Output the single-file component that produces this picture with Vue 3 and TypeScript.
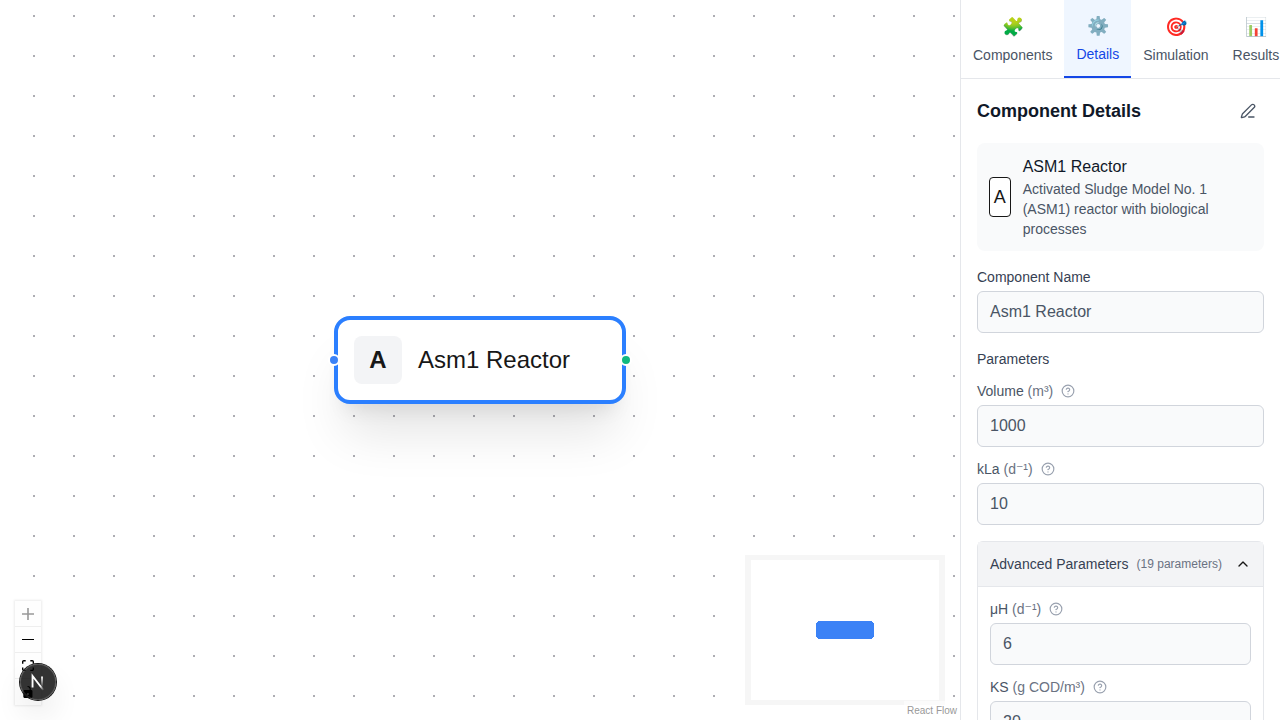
<script setup lang="ts">
interface Tab {
  icon: string
  label: string
}

interface Param {
  name: string
  unit: string
  value: string
}

const tabs: Tab[] = [
  { icon: '🧩', label: 'Components' },
  { icon: '⚙️', label: 'Details' },
  { icon: '🎯', label: 'Simulation' },
  { icon: '📊', label: 'Results' },
]
const activeTab = 'Details'

const params: Param[] = [
  { name: 'Volume', unit: '(m³)', value: '1000' },
  { name: 'kLa', unit: '(d⁻¹)', value: '10' },
]

const advanced: Param[] = [
  { name: 'μH', unit: '(d⁻¹)', value: '6' },
  { name: 'KS', unit: '(g COD/m³)', value: '20' },
]

const helpPath =
  'M22 12a10 10 0 1 1-20 0 10 10 0 0 1 20 0ZM9.09 9a3 3 0 0 1 5.83 1c0 2-3 3-3 3M12 17h.01'

const controls = [
  {
    name: 'Zoom in',
    box: '0 0 32 32',
    disabled: true,
    path: 'M32 18.133H18.133V32h-4.266V18.133H0v-4.266h13.867V0h4.266v13.867H32z',
  },
  { name: 'Zoom out', box: '0 0 32 5', disabled: false, path: 'M0 0h32v4.2H0z' },
  {
    name: 'Fit view',
    box: '0 0 32 30',
    disabled: false,
    path: 'M3.692 4.63c0-.53.4-.938.939-.938h5.215V0H4.708C2.13 0 0 2.054 0 4.63v5.216h3.692V4.631zM27.354 0h-5.2v3.692h5.17c.53 0 .984.4.984.939v5.215H32V4.631A4.624 4.624 0 0027.354 0zm.954 24.83c0 .532-.4.94-.939.94h-5.215v3.768h5.215c2.577 0 4.631-2.13 4.631-4.707v-5.139h-3.692v5.139zm-23.677.94c-.531 0-.939-.4-.939-.94v-5.138H0v5.139c0 2.577 2.13 4.707 4.708 4.707h5.138V25.77H4.631z',
  },
  {
    name: 'Toggle interactivity',
    box: '0 0 25 32',
    disabled: false,
    path: 'M21.333 10.667H19.81V7.619C19.81 3.429 16.38 0 12.19 0c-4.114 1.828-1.37 2.133.305 2.438 1.676.305 4.42 2.59 4.42 5.181v3.048H3.047A3.056 3.056 0 000 13.714v15.238A3.056 3.056 0 003.048 32h18.285a3.056 3.056 0 003.048-3.048V13.714a3.056 3.056 0 00-3.047-3.047zM12.19 24.533a3.056 3.056 0 01-3.047-3.047 3.056 3.056 0 013.047-3.048 3.056 3.056 0 013.048 3.048 3.056 3.056 0 01-3.048 3.047z',
  },
]
</script>

<template>
  <div class="app">
    <main class="canvas">
      <svg class="dots" aria-hidden="true">
        <pattern id="dot-grid" x="14" y="36" width="40" height="40" patternUnits="userSpaceOnUse">
          <circle cx="20" cy="20" r="1" fill="#91919a" />
        </pattern>
        <rect width="100%" height="100%" fill="url(#dot-grid)" />
      </svg>

      <div class="node">
        <span class="handle handle-in"></span>
        <span class="node-icon">A</span>
        <span class="node-label">Asm1 Reactor</span>
        <span class="handle handle-out"></span>
      </div>

      <div class="controls">
        <button v-for="c in controls" :key="c.name" type="button" :aria-label="c.name" :disabled="c.disabled">
          <svg :viewBox="c.box"><path :d="c.path" /></svg>
        </button>
      </div>

      <svg class="minimap" width="200" height="150" viewBox="0 0 200 150">
        <rect width="200" height="150" fill="#fff" />
        <path d="M73 66h54v1h1v1h1v14h-1v1h-1v1H73v-1h-1v-1h-1V68h1v-1h1z" fill="#3b82f6" />
        <path d="M0 0h200v150H0zM6 5v140h188V5z" fill="#f6f6f6" fill-rule="evenodd" />
      </svg>
      <div class="attribution">React Flow</div>

      <div class="badge">
        <svg width="40" height="40" viewBox="0 0 40 40" fill="none">
          <defs>
            <linearGradient id="fade-diagonal" x1="9.95555" y1="11.1226" x2="15.4778" y2="17.9671" gradientUnits="userSpaceOnUse">
              <stop stop-color="#fff" />
              <stop offset="0.604072" stop-color="#fff" stop-opacity="0" />
              <stop offset="1" stop-color="#fff" stop-opacity="0" />
            </linearGradient>
            <linearGradient id="fade-stem" x1="11.8222" y1="1.40039" x2="11.791" y2="12.5" gradientUnits="userSpaceOnUse">
              <stop stop-color="#fff" />
              <stop offset="1" stop-color="#fff" stop-opacity="0" />
            </linearGradient>
          </defs>
          <g transform="translate(12.2 13)" stroke-width="1.86">
            <path d="M13.3 15.2 2.34 1V12.6" stroke="url(#fade-diagonal)" />
            <path d="M11.825 1.5V13.1" stroke="url(#fade-stem)" />
          </g>
        </svg>
      </div>
    </main>

    <aside class="panel">
      <nav class="tabs">
        <button v-for="t in tabs" :key="t.label" type="button" class="tab" :class="{ active: t.label === activeTab }">
          <span class="tab-icon">{{ t.icon }}</span>
          <span>{{ t.label }}</span>
        </button>
      </nav>

      <div class="content">
        <header class="heading">
          <h2>Component Details</h2>
          <button type="button" class="edit" aria-label="Edit">
            <svg width="16" height="16" viewBox="0 0 24 24" fill="none" stroke="currentColor" stroke-width="2" stroke-linecap="round" stroke-linejoin="round">
              <path d="M13 21h8M21.174 6.812a1 1 0 0 0-3.986-3.987L3.842 16.174a2 2 0 0 0-.5.83l-1.321 4.352a.5.5 0 0 0 .623.622l4.353-1.32a2 2 0 0 0 .83-.497z" />
            </svg>
          </button>
        </header>

        <section class="summary">
          <span class="summary-icon">A</span>
          <div>
            <div class="summary-title">ASM1 Reactor</div>
            <div class="summary-text">Activated Sludge Model No. 1 (ASM1) reactor with biological processes</div>
          </div>
        </section>

        <div class="field name-field">
          <div class="label strong">Component Name</div>
          <div class="input">Asm1 Reactor</div>
        </div>

        <div class="label strong section-label">Parameters</div>
        <div class="fields">
          <div v-for="p in params" :key="p.name" class="field">
            <div class="label">
              <span>{{ p.name }} <span class="unit">{{ p.unit }}</span></span>
              <svg class="help" viewBox="0 0 24 24"><path :d="helpPath" /></svg>
            </div>
            <div class="input">{{ p.value }}</div>
          </div>
        </div>

        <section class="advanced">
          <div class="advanced-head">
            <span class="advanced-title">Advanced Parameters</span>
            <span class="advanced-count">(19 parameters)</span>
            <svg class="chevron" width="16" height="16" viewBox="0 0 24 24" fill="none" stroke="currentColor" stroke-width="2" stroke-linecap="round" stroke-linejoin="round">
              <path d="m18 15-6-6-6 6" />
            </svg>
          </div>
          <div class="fields advanced-body">
            <div v-for="p in advanced" :key="p.name" class="field">
              <div class="label">
                <span>{{ p.name }} <span class="unit">{{ p.unit }}</span></span>
                <svg class="help" viewBox="0 0 24 24"><path :d="helpPath" /></svg>
              </div>
              <div class="input">{{ p.value }}</div>
            </div>
          </div>
        </section>
      </div>
    </aside>
  </div>
</template>

<style>
body {
  margin: 0;
  overflow: hidden;
}
</style>

<style scoped>
* {
  box-sizing: border-box;
}

.app {
  display: flex;
  width: 1280px;
  height: 720px;
  overflow: hidden;
  background: #fff;
  color: #171717;
  font-family: 'Liberation Sans', Arial, 'DejaVu Sans', sans-serif;
  font-size: 16px;
  line-height: 24px;
}

button {
  border: 0;
  padding: 0;
  background: none;
  font: inherit;
  color: inherit;
}

svg {
  display: block;
}

.canvas {
  position: relative;
  flex: 1;
  overflow: hidden;
}

.dots {
  position: absolute;
  inset: 0;
  width: 100%;
  height: 100%;
}

.node {
  position: absolute;
  left: 334px;
  top: 316px;
  display: flex;
  align-items: center;
  gap: 16px;
  width: 292px;
  height: 88px;
  padding: 0 16px;
  border: 4px solid #2b7fff;
  border-radius: 16px;
  background: #fff;
  box-shadow: 0 40px 50px -10px rgba(0, 0, 0, 0.1), 0 16px 20px -12px rgba(0, 0, 0, 0.1);
}

.node-icon {
  display: flex;
  align-items: center;
  justify-content: center;
  width: 48px;
  height: 48px;
  border-radius: 8px;
  background: #f3f4f6;
  font-size: 24px;
  font-weight: 700;
}

.node-label {
  font-size: 24px;
  line-height: 32px;
}

.handle {
  position: absolute;
  top: 34px;
  width: 12px;
  height: 12px;
  border: 2px solid #fff;
  border-radius: 50%;
}

.handle-in {
  left: -10px;
  background: #3b82f6;
}

.handle-out {
  right: -10px;
  background: #10b981;
}

.controls {
  position: absolute;
  left: 15px;
  bottom: 15px;
  display: flex;
  flex-direction: column;
  box-shadow: 0 0 2px 1px rgba(0, 0, 0, 0.08);
}

.controls button {
  display: flex;
  align-items: center;
  justify-content: center;
  width: 26px;
  height: 26px;
  padding: 4px;
  border-bottom: 1px solid #eee;
  background: #fefefe;
}

.controls button:last-child {
  border-bottom: 0;
}

.controls svg {
  width: 100%;
  max-width: 12px;
  max-height: 12px;
  fill: #000;
}

.controls button:disabled svg {
  fill-opacity: 0.4;
}

.minimap {
  position: absolute;
  right: 15px;
  bottom: 15px;
}

.attribution {
  position: absolute;
  right: 0;
  bottom: 0;
  padding: 2px 3px;
  background: rgba(255, 255, 255, 0.5);
  color: #999;
  font-size: 10px;
  line-height: 15px;
}

.badge {
  position: absolute;
  left: 20px;
  bottom: 20px;
  display: flex;
  align-items: center;
  justify-content: center;
  width: 36px;
  height: 36px;
  border-radius: 50%;
  background: rgba(0, 0, 0, 0.8);
  box-shadow: 0 0 0 1px #171717, inset 0 0 0 1px rgba(255, 255, 255, 0.14), 0 16px 32px -8px rgba(0, 0, 0, 0.24);
}

.badge svg {
  flex: none;
}

.panel {
  display: flex;
  flex-direction: column;
  flex: none;
  width: 320px;
  border-left: 1px solid #e5e7eb;
  overflow: hidden;
}

.tabs {
  display: flex;
  flex: none;
  height: 79px;
  border-bottom: 1px solid #e5e7eb;
  overflow: hidden;
}

.tab {
  display: flex;
  flex: none;
  flex-direction: column;
  align-items: center;
  justify-content: center;
  gap: 4px;
  padding: 0 12px;
  color: #4a5565;
  font-size: 14px;
  line-height: 20px;
}

.tab.active {
  border-bottom: 2px solid #1447e6;
  background: #eff6ff;
  color: #1447e6;
}

.tab-icon {
  font-size: 18px;
  line-height: 28px;
}

.content {
  flex: 1;
  min-height: 0;
  padding: 16px;
  overflow: hidden;
}

.heading {
  display: flex;
  align-items: center;
  justify-content: space-between;
  margin-bottom: 16px;
}

h2 {
  margin: 0;
  color: #101828;
  font-size: 18px;
  font-weight: 600;
  line-height: 28px;
}

.edit {
  padding: 8px;
  color: #4a5565;
}

.summary {
  display: flex;
  align-items: center;
  gap: 12px;
  margin-bottom: 16px;
  padding: 12px;
  border-radius: 8px;
  background: #f9fafb;
}

.summary-icon {
  display: flex;
  align-items: center;
  justify-content: center;
  flex: none;
  width: 21.7px;
  height: 40px;
  border: 1px solid #171717;
  border-radius: 4px;
  background: #fff;
  font-size: 18px;
}

.summary-title {
  color: #101828;
}

.summary-text {
  color: #4a5565;
  font-size: 14px;
  line-height: 20px;
}

.field {
  display: flex;
  flex-direction: column;
  gap: 4px;
}

.name-field {
  margin-bottom: 16px;
}

.section-label {
  margin-bottom: 12px;
}

.fields {
  display: flex;
  flex-direction: column;
  gap: 12px;
}

.label {
  display: flex;
  align-items: center;
  gap: 8px;
  height: 20px;
  color: #4a5565;
  font-size: 14px;
  line-height: 20px;
}

.strong {
  color: #364153;
}

.unit {
  color: #6a7282;
}

.help {
  width: 14px;
  height: 14px;
  fill: none;
  stroke: #99a1af;
  stroke-width: 2;
  stroke-linecap: round;
  stroke-linejoin: round;
}

.input {
  height: 42px;
  padding: 8px 12px;
  border: 1px solid #d1d5dc;
  border-radius: 6px;
  background: #f9fafb;
  color: #4a5565;
}

.advanced {
  margin-top: 16px;
  border: 1px solid #e5e7eb;
  border-radius: 6px;
}

.advanced-head {
  display: flex;
  align-items: center;
  gap: 8px;
  height: 45px;
  padding: 0 12px;
  border-bottom: 1px solid #e5e7eb;
  background: #f3f4f6;
}

.advanced-title {
  color: #364153;
  font-size: 14px;
}

.advanced-count {
  color: #6a7282;
  font-size: 12px;
}

.chevron {
  margin-left: auto;
}

.advanced-body {
  padding: 12px;
}
</style>
